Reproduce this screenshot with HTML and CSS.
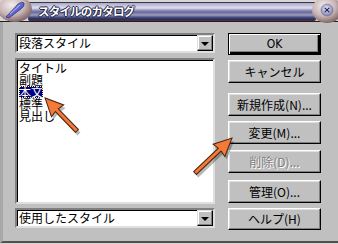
FILE: index.html
```html
<!DOCTYPE html>
<html lang="ja">
<head>
<meta charset="utf-8">
<link rel="stylesheet" href="styles.css">
</head>
<body>
<div class="window">
  <div class="titlebar">
    <div class="title-strip">
      <span class="title-text">スタイルのカタログ</span>
    </div>
    <svg class="app-icon" width="34" height="26" viewBox="0 0 34 26">
      <defs>
        <radialGradient id="sph" cx="40%" cy="35%" r="65%">
          <stop offset="0" stop-color="#f4ecec"/>
          <stop offset="0.6" stop-color="#c8b4b4"/>
          <stop offset="1" stop-color="#806a6a"/>
        </radialGradient>
        <linearGradient id="pen" x1="0" y1="0" x2="1" y2="1">
          <stop offset="0" stop-color="#9aa6ff"/>
          <stop offset="1" stop-color="#2830a0"/>
        </linearGradient>
      </defs>
      <ellipse cx="15" cy="11" rx="17" ry="13" fill="url(#sph)"/>
      <path d="M6 19 L18 6 Q22 3 24 5 Q25 8 21 11 L9 20 Z" fill="url(#pen)" stroke="#202060" stroke-width="0.6"/>
      <path d="M10 16 L20 7" stroke="#c8d0ff" stroke-width="0.8"/>
    </svg>
    <svg class="close-icon" width="30" height="26" viewBox="0 0 30 26">
      <defs>
        <radialGradient id="sph2" cx="40%" cy="35%" r="65%">
          <stop offset="0" stop-color="#f4ecec"/>
          <stop offset="0.6" stop-color="#c8b4b4"/>
          <stop offset="1" stop-color="#806a6a"/>
        </radialGradient>
        <radialGradient id="btn" cx="45%" cy="40%" r="60%">
          <stop offset="0" stop-color="#e8e8ff"/>
          <stop offset="1" stop-color="#8080b0"/>
        </radialGradient>
      </defs>
      <ellipse cx="17" cy="11" rx="15" ry="13" fill="url(#sph2)"/>
      <circle cx="17" cy="11" r="6" fill="url(#btn)" stroke="#6a6a90" stroke-width="0.6"/>
      <path d="M14.8 8.8 L19.2 13.2 M19.2 8.8 L14.8 13.2" stroke="#202040" stroke-width="1.1"/>
    </svg>
  </div>
  <div class="content">
    <div class="left">
      <div class="combo">
        <span class="combo-text">段落スタイル</span>
        <span class="drop"><span class="tri"></span></span>
      </div>
      <div class="list">
        <div class="item">タイトル</div>
        <div class="item">副題</div>
        <div class="item"><span class="sel">本文</span></div>
        <div class="item">標準</div>
        <div class="item">見出し</div>
      </div>
      <div class="combo combo-bottom">
        <span class="combo-text">使用したスタイル</span>
        <span class="drop"><span class="tri"></span></span>
      </div>
    </div>
    <div class="right">
      <button class="btn btn-ok">OK</button>
      <button class="btn btn-cancel">キャンセル</button>
      <button class="btn btn-new">新規作成(N)...</button>
      <button class="btn btn-change">変更(M)...</button>
      <button class="btn btn-delete" disabled>削除(D)...</button>
      <button class="btn btn-manage">管理(O)...</button>
      <button class="btn btn-help">ヘルプ(H)</button>
    </div>
  </div>
</div>
<svg class="arrows" width="338" height="244" viewBox="0 0 338 244">
  <g transform="translate(79,134) rotate(-134)">
    <polygon points="0,-2 29,-2 28,-8.5 46,0 28,8.5 29,2 0,2" fill="rgba(0,0,0,0.28)"/>
  </g>
  <g transform="translate(77,131) rotate(-134)">
    <polygon points="0,-2 29,-2 28,-8.5 46,0 28,8.5 29,2 0,2" fill="#f47a38" stroke="#4a2410" stroke-width="1"/>
  </g>
  <g transform="translate(197,176) rotate(-43.4)">
    <polygon points="0,-2 34,-2 33,-8.5 51,0 33,8.5 34,2 0,2" fill="rgba(0,0,0,0.28)"/>
  </g>
  <g transform="translate(195,173) rotate(-43.4)">
    <polygon points="0,-2 34,-2 33,-8.5 51,0 33,8.5 34,2 0,2" fill="#f47a38" stroke="#4a2410" stroke-width="1"/>
  </g>
</svg>
</body>
</html>
```

FILE: styles.css
```css
* { box-sizing: border-box; }
html, body {
  margin: 0;
  padding: 0;
  width: 338px;
  height: 244px;
  overflow: hidden;
  background: #d8d4d4;
  font-family: "Noto Sans CJK JP", "DejaVu Sans", sans-serif;
  font-size: 12px;
}
.window {
  width: 338px;
  height: 243px;
  display: flex;
  flex-direction: column;
  background: #c0c0c0;
  border-left: 3px solid #a8a8a8;
  border-bottom: 2px solid #505050;
  position: relative;
}
.titlebar {
  height: 22px;
  margin-left: -3px;
  width: 338px;
  position: relative;
  background: #d8d4d4;
  border-bottom: 1px solid #2a1a20;
}
.title-strip {
  position: absolute;
  left: 28px;
  right: 22px;
  top: 2px;
  height: 19px;
  background: linear-gradient(to bottom,
    #383850 0px, #383850 1px,
    #a8a8c8 1px, #c8c8e0 4px,
    #e0e0f0 6px, #9898c0 8px,
    #6a6a98 10px, #8888b0 12px,
    #a0a0c4 13px, #505888 15px,
    #202c60 17px, #4a3040 18px, #4a3040 19px);
  border-radius: 0 0 2px 2px;
}
.title-text {
  position: absolute;
  left: 10px;
  top: 1px;
  color: #ffffff;
  font-weight: bold;
  font-size: 11.5px;
  line-height: 16px;
  letter-spacing: -0.8px;
  text-shadow: 1px 0 #202040, -1px 0 #202040, 0 1px #202040, 0 -1px #202040;
}
.app-icon {
  position: absolute;
  left: 0;
  top: -2px;
}
.close-icon {
  position: absolute;
  right: -2px;
  top: -1px;
}
.content {
  flex: 1;
  display: flex;
  gap: 13px;
  padding: 11px 0 0 12px;
}
.left {
  width: 200px;
  display: flex;
  flex-direction: column;
}
.combo {
  height: 20px;
  background: #fff;
  border: 2px solid;
  border-color: #808080 #dfdfdf #dfdfdf #808080;
  box-shadow: inset 1px 1px #000;
  display: flex;
  align-items: center;
  padding-left: 2px;
}
.combo-text {
  flex: 1;
  line-height: 14px;
  color: #000;
}
.drop {
  width: 16px;
  height: 16px;
  background: #c0c0c0;
  border: 1px solid;
  border-color: #dfdfdf #000 #000 #dfdfdf;
  box-shadow: inset -1px -1px #808080, inset 1px 1px #fff;
  display: flex;
  align-items: center;
  justify-content: center;
}
.tri {
  width: 0;
  height: 0;
  border-left: 4px solid transparent;
  border-right: 4px solid transparent;
  border-top: 4px solid #000;
  margin-top: 1px;
}
.list {
  margin-top: 5px;
  height: 146px;
  background: #fff;
  border: 2px solid;
  border-color: #808080 #dfdfdf #dfdfdf #808080;
  box-shadow: inset 1px 1px #000;
  padding: 2px 0 0 2px;
}
.item {
  height: 12px;
  line-height: 12px;
  font-size: 12px;
  color: #000;
  white-space: nowrap;
}
.sel {
  display: inline-block;
  background: #000080;
  color: #fff;
  outline: 1px dotted #ffff80;
  outline-offset: -1px;
  line-height: 12px;
}
.combo-bottom {
  margin-top: 4px;
}
.right {
  width: 93px;
  display: flex;
  flex-direction: column;
}
.btn {
  width: 93px;
  height: 23px;
  padding: 0;
  font-family: "Noto Sans CJK JP", "DejaVu Sans", sans-serif;
  font-size: 12px;
  line-height: 14px;
  color: #000;
  background: #c0c0c0;
  border: 1px solid;
  border-color: #fff #000 #000 #fff;
  box-shadow: inset -1px -1px #808080, inset 1px 1px #dfdfdf;
  white-space: nowrap;
}
.btn-ok {
  height: 22px;
  border: 1px solid #000;
  box-shadow: inset 1px 1px #fff, inset -2px -2px #000, inset -3px -3px #808080;
  font-family: "Liberation Sans Narrow", "DejaVu Sans Condensed", sans-serif;
  font-size: 12px;
}
.btn-cancel { margin-top: 5px; }
.btn-new { margin-top: 10px; }
.btn-change { margin-top: 5px; }
.btn-delete {
  margin-top: 6px;
  color: #808080;
  text-shadow: 1px 1px #fff;
}
.btn-manage { margin-top: 7px; }
.btn-help { margin-top: 5px; height: 22px; }
.arrows {
  position: absolute;
  left: 0;
  top: 0;
  pointer-events: none;
}
```
